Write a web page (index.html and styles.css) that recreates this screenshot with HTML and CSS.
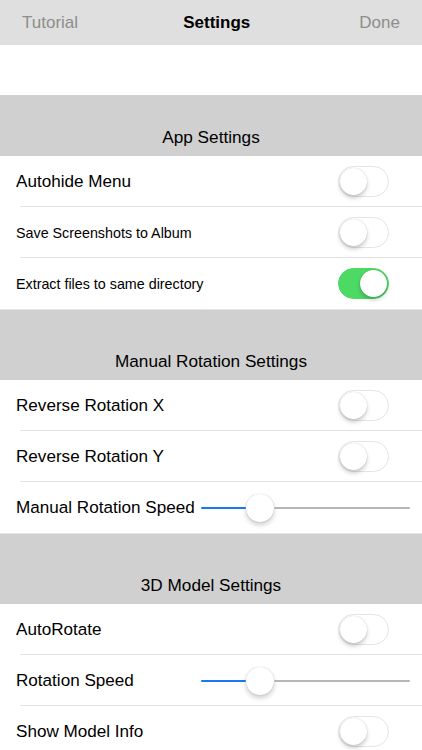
FILE: index.html
```html
<!DOCTYPE html>
<html>
<head>
<meta charset="utf-8">
<link rel="stylesheet" href="styles.css">
</head>
<body>
<div class="nav">
  <span class="nav-btn">Tutorial</span>
  <span class="nav-title">Settings</span>
  <span class="nav-btn">Done</span>
</div>
<div class="spacer"></div>

<div class="header first">App Settings</div>
<div class="row"><span class="label">Autohide Menu</span><div class="switch"><div class="knob"></div></div></div>
<div class="row"><span class="label small">Save Screenshots to Album</span><div class="switch"><div class="knob"></div></div></div>
<div class="row last"><span class="label small">Extract files to same directory</span><div class="switch on"><div class="knob"></div></div></div>

<div class="header">Manual Rotation Settings</div>
<div class="row"><span class="label">Reverse Rotation X</span><div class="switch"><div class="knob"></div></div></div>
<div class="row"><span class="label">Reverse Rotation Y</span><div class="switch"><div class="knob"></div></div></div>
<div class="row last"><span class="label">Manual Rotation Speed</span><div class="slider"><div class="fill"></div><div class="thumb"></div><div class="rest"></div></div></div>

<div class="header">3D Model Settings</div>
<div class="row"><span class="label">AutoRotate</span><div class="switch"><div class="knob"></div></div></div>
<div class="row"><span class="label">Rotation Speed</span><div class="slider"><div class="fill"></div><div class="thumb"></div><div class="rest"></div></div></div>
<div class="row last"><span class="label">Show Model Info</span><div class="switch"><div class="knob"></div></div></div>
</body>
</html>
```

FILE: styles.css
```css
html, body {
  margin: 0;
  padding: 0;
  background: #ffffff;
  font-family: "Liberation Sans", Arial, sans-serif;
  color: #000;
  overflow: hidden;
  height: 750px;
}
.nav {
  height: 45px;
  background: #dfdfdf;
  display: flex;
  align-items: center;
  justify-content: space-between;
  padding: 0 22px 0 22px;
  box-sizing: border-box;
}
.nav-btn {
  font-size: 17px;
  color: #8d8d8d;
}
.nav-title {
  font-size: 17px;
  font-weight: bold;
  padding-right: 4px;
}
.spacer {
  height: 50px;
}
.header {
  height: 71px;
  background: #d0d0d0;
  display: flex;
  align-items: flex-end;
  justify-content: center;
  padding-bottom: 9px;
  box-sizing: border-box;
  font-size: 17.2px;
  line-height: 20px;
  border-top: 1px solid #e4e4e4;
}
.header.first {
  height: 61px;
  border-top: none;
}
.row {
  height: 51px;
  display: flex;
  align-items: center;
  padding-left: 16px;
  padding-top: 1px;
  box-sizing: border-box;
  background: linear-gradient(#e2e2e2, #e2e2e2) no-repeat 20px 100% / calc(100% - 20px) 1px;
}
.row.last {
  background: none;
}
.label {
  flex: 1;
  font-size: 17.1px;
  white-space: nowrap;
}
.label.small {
  font-size: 14.3px;
}
.switch {
  width: 51px;
  height: 31px;
  border-radius: 16px;
  border: 1.5px solid #e5e5e5;
  box-sizing: border-box;
  margin-right: 33px;
  margin-top: -1px;
  display: flex;
  align-items: center;
  padding: 0 1px;
  background: #fff;
}
.switch.on {
  background: #4cd964;
  border-color: #4cd964;
  justify-content: flex-end;
}
.knob {
  width: 27px;
  height: 27px;
  border-radius: 50%;
  background: #fff;
  box-shadow: 0 3px 4px rgba(0,0,0,0.2), 0 0 1px rgba(0,0,0,0.25);
}
.slider {
  width: 209px;
  margin-right: 12px;
  display: flex;
  align-items: center;
  height: 30px;
}
.fill {
  width: 45px;
  height: 2px;
  background: #1b78f2;
  border-radius: 1px;
}
.thumb {
  width: 28px;
  height: 28px;
  border-radius: 50%;
  background: #fff;
  box-shadow: 0 3px 5px rgba(0,0,0,0.2), 0 0 1px rgba(0,0,0,0.25);
  flex: none;
}
.rest {
  flex: 1;
  height: 2px;
  background: #b6b6b6;
  border-radius: 1px;
}
```
